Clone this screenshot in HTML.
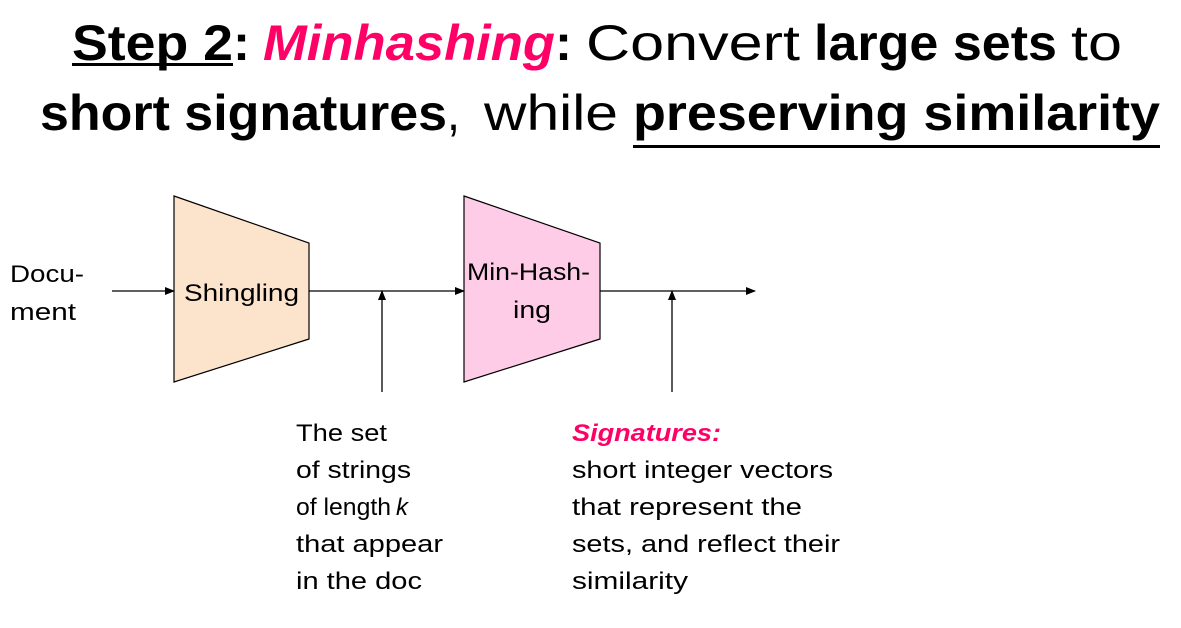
<!DOCTYPE html>
<html><head><meta charset="utf-8"><style>
html,body{margin:0;padding:0;background:#fff;}
svg{display:block;font-family:"Liberation Sans",sans-serif;}
</style></head><body>
<svg width="1181" height="628" viewBox="0 0 1181 628" xmlns="http://www.w3.org/2000/svg">
<defs><marker id="a" markerWidth="10" markerHeight="8" refX="9" refY="4" orient="auto" markerUnits="userSpaceOnUse"><path d="M0,0 L10,4 L0,8 Z" fill="#000"/></marker></defs>
<g font-size="50">
<text y="60">
<tspan x="72" font-weight="bold" textLength="161" lengthAdjust="spacingAndGlyphs">Step 2</tspan><tspan x="233" font-weight="bold" textLength="17" lengthAdjust="spacingAndGlyphs">:</tspan><tspan x="263" font-weight="bold" font-style="italic" fill="#FF0066" textLength="292" lengthAdjust="spacingAndGlyphs">Minhashing</tspan><tspan x="555" font-weight="bold" textLength="17" lengthAdjust="spacingAndGlyphs">:</tspan><tspan x="586" textLength="214" lengthAdjust="spacingAndGlyphs">Convert</tspan><tspan x="814" font-weight="bold" textLength="243" lengthAdjust="spacingAndGlyphs">large sets</tspan><tspan x="1071" textLength="51" lengthAdjust="spacingAndGlyphs">to</tspan>
</text>
<text y="130">
<tspan x="40" font-weight="bold" textLength="407" lengthAdjust="spacingAndGlyphs">short signatures</tspan><tspan x="447" textLength="13" lengthAdjust="spacingAndGlyphs">,</tspan><tspan x="484" textLength="134" lengthAdjust="spacingAndGlyphs">while</tspan><tspan x="633" font-weight="bold" textLength="527" lengthAdjust="spacingAndGlyphs">preserving similarity</tspan>
</text>
</g>
<rect x="72" y="63" width="161" height="3" fill="#000"/>
<rect x="633" y="145" width="527" height="3" fill="#000"/>

<polygon points="174,196 309,243 309,339 174,382" fill="#FCE4CC" stroke="#000" stroke-width="1.2"/>
<polygon points="464,196 600,243 600,339 464,382" fill="#FFCCE8" stroke="#000" stroke-width="1.2"/>
<g stroke="#000" stroke-width="1.3">
<line x1="112" y1="291" x2="174" y2="291" marker-end="url(#a)"/>
<line x1="309" y1="291" x2="464" y2="291" marker-end="url(#a)"/>
<line x1="600" y1="291" x2="755" y2="291" marker-end="url(#a)"/>
<line x1="382" y1="392" x2="382" y2="291" marker-end="url(#a)"/>
<line x1="672" y1="392" x2="672" y2="291" marker-end="url(#a)"/>
</g>
<g font-size="24">
<text x="184" y="301" textLength="115" lengthAdjust="spacingAndGlyphs">Shingling</text>
<text x="467" y="280" textLength="123" lengthAdjust="spacingAndGlyphs">Min-Hash-</text>
<text x="513" y="318" textLength="38" lengthAdjust="spacingAndGlyphs">ing</text>
<text x="10" y="282" textLength="74" lengthAdjust="spacingAndGlyphs">Docu-</text>
<text x="10" y="320" textLength="66" lengthAdjust="spacingAndGlyphs">ment</text>

<text x="296" y="441" textLength="91" lengthAdjust="spacingAndGlyphs">The set</text>
<text x="296" y="478" textLength="115" lengthAdjust="spacingAndGlyphs">of strings</text>
<text x="296" y="515" textLength="95" lengthAdjust="spacingAndGlyphs">of length</text>
<text x="396" y="515" font-style="italic">k</text>
<text x="296" y="552" textLength="147" lengthAdjust="spacingAndGlyphs">that appear</text>
<text x="296" y="589" textLength="126" lengthAdjust="spacingAndGlyphs">in the doc</text>

<text x="572" y="441" font-weight="bold" font-style="italic" fill="#FF0066" textLength="149" lengthAdjust="spacingAndGlyphs">Signatures:</text>
<text x="572" y="478" textLength="261" lengthAdjust="spacingAndGlyphs">short integer vectors</text>
<text x="572" y="515" textLength="230" lengthAdjust="spacingAndGlyphs">that represent the</text>
<text x="572" y="552" textLength="268" lengthAdjust="spacingAndGlyphs">sets, and reflect their</text>
<text x="572" y="589" textLength="116" lengthAdjust="spacingAndGlyphs">similarity</text>
</g>
</svg>
</body></html>
